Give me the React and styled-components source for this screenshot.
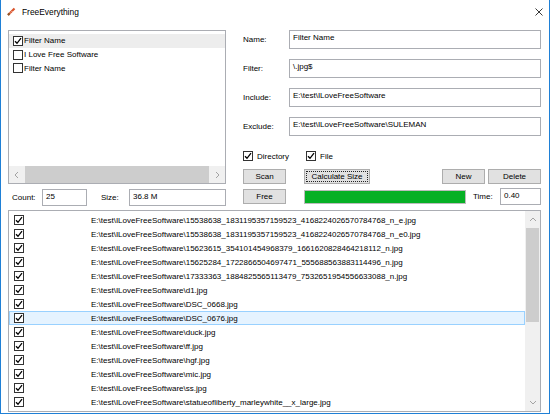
import React from 'react';
import styled, { createGlobalStyle } from 'styled-components';

const GlobalStyle = createGlobalStyle`
  html, body {
    margin: 0;
    padding: 0;
    background: #ffffff;
  }
`;

const Window = styled.div`
  width: 550px;
  height: 414px;
  box-sizing: border-box;
  border: 1px solid #1f80d6;
  border-top: none;
  background: #ffffff;
  display: flex;
  flex-direction: column;
  overflow: hidden;
  font-family: "Liberation Sans", Arial, sans-serif;
  font-size: 8px;
  color: #000;
`;

const TitleBar = styled.div`
  height: 23px;
  flex: none;
  display: flex;
  align-items: center;
  gap: 6px;
  padding: 0 6px;
`;

const TitleText = styled.span`
  font-size: 8.4px;
`;

const CloseButton = styled.span`
  margin-left: auto;
  display: flex;
`;

const Content = styled.div`
  flex: 1;
  display: flex;
  flex-direction: column;
  padding: 7px 8px 1px 7px;
  min-height: 0;
`;

const TopSection = styled.div`
  display: flex;
  gap: 17px;
  flex: none;
`;

const LeftColumn = styled.div`
  width: 218px;
  display: flex;
  flex-direction: column;
`;

const RightColumn = styled.div`
  flex: 1;
  display: flex;
  flex-direction: column;
`;

const ListBox = styled.div`
  height: 154px;
  box-sizing: border-box;
  border: 1px solid #abadb3;
  display: flex;
  flex-direction: column;
  background: #fff;
`;

const ListItems = styled.div`
  flex: 1;
  padding-top: 3px;
`;

const FilterItem = styled.div`
  height: 13.8px;
  display: flex;
  align-items: center;
  gap: 1px;
  padding-left: 4px;
  background: ${p => (p.$selected ? '#ededed' : 'transparent')};
`;

const HScroll = styled.div`
  height: 17px;
  display: flex;
  align-items: stretch;
  background: #f0f0f0;
`;

const ArrowBox = styled.div`
  width: ${p => p.$w || 15}px;
  height: ${p => p.$h || 17}px;
  flex: none;
  display: flex;
  align-items: center;
  justify-content: center;
`;

const HThumb = styled.div`
  flex: 1;
  margin: 0 1px;
  background: #cdcdcd;
`;

const CountRow = styled.div`
  margin-top: 5px;
  height: 17px;
  display: flex;
  align-items: center;
  padding-left: 4px;
`;

const Label = styled.span`
  width: ${p => (p.$w ? `${p.$w}px` : 'auto')};
  flex: none;
  margin-left: ${p => p.$ml || 0}px;
`;

const TextBox = styled.div`
  box-sizing: border-box;
  width: ${p => (p.$w ? `${p.$w}px` : 'auto')};
  flex: ${p => (p.$w ? 'none' : '1')};
  height: ${p => p.$h || 17}px;
  border: 1px solid #abadb3;
  background: #fff;
  padding: 2px 3px 0;
  white-space: nowrap;
  overflow: hidden;
`;

const FieldRow = styled.div`
  height: 19px;
  display: flex;
  align-items: center;
  margin-bottom: ${p => (p.$last ? 0 : 10)}px;
`;

const CheckRow = styled.div`
  margin-top: 14px;
  height: 12px;
  display: flex;
  align-items: center;
`;

const CheckLabel = styled.label`
  display: flex;
  align-items: center;
  gap: 4px;
  margin-right: 17px;
`;

const ButtonRow = styled.div`
  margin-top: ${p => p.$mt}px;
  height: ${p => p.$h}px;
  display: flex;
  align-items: center;
`;

const Button = styled.div`
  box-sizing: border-box;
  width: ${p => p.$w}px;
  height: ${p => p.$h || 15}px;
  flex: none;
  margin-left: ${p => (p.$auto ? 'auto' : `${p.$ml || 0}px`)};
  background: #e1e1e1;
  border: 1px solid #adadad;
  display: flex;
  align-items: center;
  justify-content: center;
  position: relative;
  &::after {
    content: '';
    display: ${p => (p.$focus ? 'block' : 'none')};
    position: absolute;
    inset: 1px;
    border: 1px dotted #222;
  }
`;

const Progress = styled.div`
  margin-left: 18px;
  width: 162px;
  height: 14px;
  box-sizing: border-box;
  border: 1px solid #bcbcbc;
  background: #e6e6e6;
  flex: none;
  display: flex;
`;

const ProgressFill = styled.div`
  background: #06b025;
  height: 100%;
`;

const FileList = styled.div`
  flex: 1;
  margin-top: 4px;
  border: 1px solid #abadb3;
  display: flex;
  min-height: 0;
  background: #fff;
`;

const FileRows = styled.div`
  flex: 1;
  padding-top: 2px;
  overflow: hidden;
`;

const FileRow = styled.div`
  height: 14px;
  box-sizing: border-box;
  display: flex;
  align-items: center;
  padding-left: 4px;
  border: 1px solid ${p => (p.$selected ? '#99d1ff' : 'transparent')};
  background: ${p => (p.$selected ? '#e5f3ff' : 'transparent')};
  white-space: nowrap;
`;

const FilePath = styled.span`
  margin-left: 67px;
`;

const VScroll = styled.div`
  width: 15px;
  flex: none;
  background: #f0f0f0;
  display: flex;
  flex-direction: column;
  align-items: stretch;
`;

const VThumb = styled.div`
  height: 94px;
  margin: 0 1px;
  background: #cdcdcd;
`;

const Spacer = styled.div`
  flex: 1;
`;

const Box = styled.span`
  width: 10px;
  height: 10px;
  box-sizing: border-box;
  border: 1px solid #333;
  background: #fff;
  flex: none;
  display: flex;
  align-items: center;
  justify-content: center;
`;

function Check({ checked }) {
  return (
    <Box>
      {checked && (
        <svg width="8" height="8" viewBox="0 0 8 8">
          <path d="M1 4.2 L3 6.3 L7 1.2" fill="none" stroke="#000" strokeWidth="1.3" />
        </svg>
      )}
    </Box>
  );
}

function Chevron({ dir, color = '#a3a3a3' }) {
  const paths = {
    up: 'M1 5 L4 2 L7 5',
    down: 'M1 2 L4 5 L7 2',
    left: 'M5 1 L2 4 L5 7',
    right: 'M2 1 L5 4 L2 7',
  };
  return (
    <svg width="8" height="8" viewBox="0 0 8 8">
      <path d={paths[dir]} fill="none" stroke={color} strokeWidth="1" />
    </svg>
  );
}

const base = 'E:\\test\\ILoveFreeSoftware\\';
const files = [
  '15538638_1831195357159523_4168224026570784768_n_e.jpg',
  '15538638_1831195357159523_4168224026570784768_n_e0.jpg',
  '15623615_354101454968379_1661620828464218112_n.jpg',
  '15625284_1722866504697471_555688563883114496_n.jpg',
  '17333363_1884825565113479_7532651954556633088_n.jpg',
  'd1.jpg',
  'DSC_0668.jpg',
  'DSC_0676.jpg',
  'duck.jpg',
  'ff.jpg',
  'hgf.jpg',
  'mic.jpg',
  'ss.jpg',
  'statueofliberty_marleywhite__x_large.jpg',
];

const filters = [
  { name: 'Filter Name', checked: true, selected: true },
  { name: 'I Love Free Software', checked: false },
  { name: 'Filter Name', checked: false },
];

function AppIcon() {
  return (
    <svg width="9" height="9" viewBox="0 0 9 9">
      <path d="M1 8 L7.5 1.5" stroke="#d9532b" strokeWidth="2.2" />
      <path d="M1 8 L2.5 6.5" stroke="#8a5a2b" strokeWidth="2.2" />
      <path d="M3 5.5 L4 6.5 M4.5 4 L5.5 5" stroke="#fff" strokeWidth="0.7" />
    </svg>
  );
}

export default function App() {
  return (
    <>
      <GlobalStyle />
      <Window>
        <TitleBar>
          <AppIcon />
          <TitleText>FreeEverything</TitleText>
          <CloseButton>
            <svg width="8" height="8" viewBox="0 0 8 8">
              <path d="M0.5 0.5 L7.5 7.5 M7.5 0.5 L0.5 7.5" stroke="#222" strokeWidth="0.9" />
            </svg>
          </CloseButton>
        </TitleBar>
        <Content>
          <TopSection>
            <LeftColumn>
              <ListBox>
                <ListItems>
                  {filters.map((f, i) => (
                    <FilterItem key={i} $selected={f.selected}>
                      <Check checked={f.checked} />
                      <span>{f.name}</span>
                    </FilterItem>
                  ))}
                </ListItems>
                <HScroll>
                  <ArrowBox $w={15}>
                    <Chevron dir="left" />
                  </ArrowBox>
                  <HThumb />
                  <ArrowBox $w={15}>
                    <Chevron dir="right" />
                  </ArrowBox>
                </HScroll>
              </ListBox>
              <CountRow>
                <Label $w={30}>Count:</Label>
                <TextBox $w={45}>25</TextBox>
                <Label $w={28} $ml={14}>Size:</Label>
                <TextBox>36.8 M</TextBox>
              </CountRow>
            </LeftColumn>
            <RightColumn>
              <FieldRow>
                <Label $w={46}>Name:</Label>
                <TextBox $h={19}>Filter Name</TextBox>
              </FieldRow>
              <FieldRow>
                <Label $w={46}>Filter:</Label>
                <TextBox $h={19}>\.jpg$</TextBox>
              </FieldRow>
              <FieldRow>
                <Label $w={46}>Include:</Label>
                <TextBox $h={19}>E:\test\ILoveFreeSoftware</TextBox>
              </FieldRow>
              <FieldRow $last>
                <Label $w={46}>Exclude:</Label>
                <TextBox $h={19}>E:\test\ILoveFreeSoftware\SULEMAN</TextBox>
              </FieldRow>
              <CheckRow>
                <CheckLabel>
                  <Check checked />
                  <span>Directory</span>
                </CheckLabel>
                <CheckLabel>
                  <Check checked />
                  <span>File</span>
                </CheckLabel>
              </CheckRow>
              <ButtonRow $mt={7} $h={15}>
                <Button $w={43}>Scan</Button>
                <Button $w={66} $ml={18} $focus>Calculate Size</Button>
                <Button $w={43} $auto>New</Button>
                <Button $w={53} $ml={3}>Delete</Button>
              </ButtonRow>
              <ButtonRow $mt={4} $h={17}>
                <Button $w={43}>Free</Button>
                <Progress>
                  <ProgressFill style={{ width: '100%' }} />
                </Progress>
                <Label $w={27} $ml={7}>Time:</Label>
                <TextBox>0.40</TextBox>
              </ButtonRow>
            </RightColumn>
          </TopSection>
          <FileList>
            <FileRows>
              {files.map((f, i) => (
                <FileRow key={i} $selected={f === 'DSC_0676.jpg'}>
                  <Check checked />
                  <FilePath>{base + f}</FilePath>
                </FileRow>
              ))}
              <FileRow>
                <Check />
              </FileRow>
            </FileRows>
            <VScroll>
              <ArrowBox $w={15} $h={17}>
                <Chevron dir="up" />
              </ArrowBox>
              <VThumb />
              <Spacer />
              <ArrowBox $w={15} $h={17}>
                <Chevron dir="down" />
              </ArrowBox>
            </VScroll>
          </FileList>
        </Content>
      </Window>
    </>
  );
}
